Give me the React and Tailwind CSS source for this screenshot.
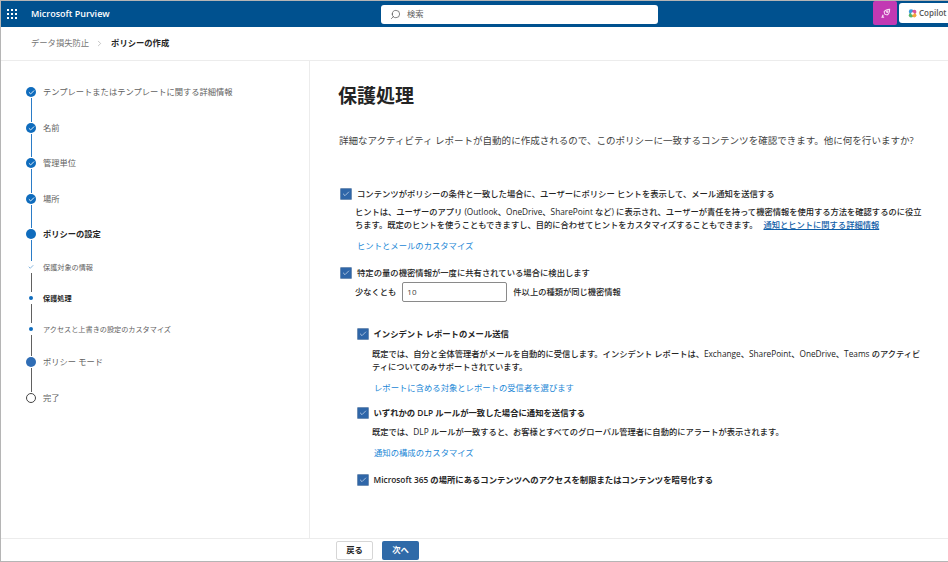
import { Check, ChevronRight, Search } from 'lucide-react';

const FONT = { fontFamily: '"Open Sans", "Noto Sans CJK JP", sans-serif' };

const steps = [
  { label: 'テンプレートまたはテンプレートに関する詳細情報', kind: 'done', h: 'h-[36px]', line: 'blue' },
  { label: '名前', kind: 'done', h: 'h-[35px]', line: 'blue' },
  { label: '管理単位', kind: 'done', h: 'h-[36px]', line: 'blue' },
  { label: '場所', kind: 'done', h: 'h-[35px]', line: 'blue' },
  { label: 'ポリシーの設定', kind: 'current', h: 'h-[33px]', line: 'blue' },
  { label: '保護対象の情報', kind: 'subdone', h: 'h-[31px]', line: 'gray' },
  { label: '保護処理', kind: 'subcurrent', h: 'h-[31px]', line: 'gray' },
  { label: 'アクセスと上書きの設定のカスタマイズ', kind: 'sub', h: 'h-[33px]', line: 'gray' },
  { label: 'ポリシー モード', kind: 'todo', h: 'h-[36px]', line: 'gray' },
  { label: '完了', kind: 'end', h: 'h-[14px]' },
];

function StepIcon({ kind }) {
  if (kind === 'done') {
    return (
      <span className="w-[10px] h-[10px] rounded-full bg-[#0f6cbd] flex items-center justify-center">
        <Check size={7} strokeWidth={3} className="text-white" />
      </span>
    );
  }
  if (kind === 'current') return <span className="w-[10px] h-[10px] rounded-full bg-[#0f6cbd]" />;
  if (kind === 'todo') return <span className="w-[10px] h-[10px] rounded-full bg-[#2f6db5]" />;
  if (kind === 'end') return <span className="w-[10px] h-[10px] rounded-full border border-[#444] bg-white" />;
  if (kind === 'subdone') return <Check size={6} strokeWidth={2} className="text-[#0f6cbd]" />;
  return <span className="w-[4px] h-[4px] rounded-full bg-[#0f6cbd]" />;
}

function Step({ step }) {
  const bold = step.kind === 'current' || step.kind === 'subcurrent';
  const small = step.kind === 'subdone' || step.kind === 'sub' || step.kind === 'subcurrent';
  return (
    <div className={`flex ${step.h}`}>
      <div className="w-[10px] flex flex-col items-center">
        <div className="h-[10px] flex items-center justify-center shrink-0">
          <StepIcon kind={step.kind} />
        </div>
        {step.line && (
          <div className={`w-px flex-1 mt-[1px] mb-[1px] ${step.line === 'blue' ? 'bg-[#2b7cc7]' : 'bg-[#616161]'}`} />
        )}
      </div>
      <span
        className={`ml-[7px] h-[10px] flex items-center whitespace-nowrap ${small ? 'text-[7.15px]' : 'text-[8.28px]'} ${
          bold ? 'font-bold text-[#242424]' : 'text-[#616161]'
        }`}
      >
        {step.label}
      </span>
    </div>
  );
}

function Box() {
  return (
    <span className="w-[12px] h-[12px] shrink-0 bg-[#2f66a8] border border-[#6f8fb5] rounded-[1px] flex items-center justify-center">
      <Check size={8} strokeWidth={2} className="text-[#dfe9f5]" />
    </span>
  );
}

function Option({ label, bold }) {
  return (
    <div className={`flex items-center ml-[1px] ${bold ? 'gap-[4.5px]' : 'gap-[5px]'}`}>
      <Box />
      <span className={`text-[8.33px] leading-[13px] whitespace-nowrap text-[#242424] ${bold ? 'font-semibold' : 'font-medium'}`}>{label}</span>
    </div>
  );
}

function TextLink({ children, className = '' }) {
  return <div className={`text-[8.33px] leading-[13px] text-[#1b87d6] ${className}`}>{children}</div>;
}

function Desc({ children, className = '' }) {
  return <p className={`text-[8.28px] leading-[13px] text-[#242424] font-medium ${className}`}>{children}</p>;
}

export default function App() {
  return (
    <div style={FONT} className="w-[948px] h-[562px] overflow-hidden bg-white flex flex-col border-l border-[#b5b5b5] border-t border-b text-[#242424]">
      <header className="h-[26px] shrink-0 bg-[#00518f] flex items-center">
        <div className="w-[380px] shrink-0 flex items-center">
          <div className="grid grid-cols-3 gap-[2px] ml-[6px] w-[10px]">
            {Array.from({ length: 9 }).map((_, i) => (
              <span key={i} className="w-[2px] h-[2px] bg-white" />
            ))}
          </div>
          <span className="ml-[14px] text-white text-[9px] font-semibold whitespace-nowrap">Microsoft Purview</span>
        </div>
        <div className="w-[277px] shrink-0 h-[19px] bg-white rounded-[3px] flex items-center px-[9px] gap-[6px]">
          <Search size={11} strokeWidth={1.4} className="text-[#444] -scale-x-100" />
          <span className="text-[8.3px] text-[#616161]">検索</span>
        </div>
        <button className="ml-[215px] w-[24px] shrink-0 h-[24px] -mt-[2px] bg-[#c239b3] rounded-[2px] flex items-center justify-center">
          <svg width="11" height="11" viewBox="0 0 16 16" fill="none" stroke="#f8dcf4" strokeWidth="1.5">
            <path d="M6 5.5 C8 2.5 11 2 14 2 C14 5 13.5 8 10.5 10 L7 9 Z" />
            <circle cx="10.5" cy="5.5" r="1" />
            <path d="M3 10.5 L5 10.5 M2 13.5 L6 13.5 M5 11 L3 13" />
          </svg>
        </button>
        <button className="ml-[2px] w-[60px] shrink-0 h-[20px] -mt-[2px] bg-white rounded-[3px] flex items-center pl-[9px] gap-[2px]">
          <svg width="9" height="9" viewBox="0 0 10 10" className="shrink-0">
            <circle cx="3.5" cy="3" r="2.6" fill="#3b9be0" />
            <circle cx="7" cy="3.2" r="2.4" fill="#d9539a" />
            <circle cx="3.4" cy="7" r="2.5" fill="#58b368" />
            <circle cx="7" cy="7" r="2.4" fill="#f0a63c" />
            <circle cx="5" cy="5" r="1.4" fill="#fff" />
          </svg>
          <span className="text-[8px] font-semibold text-[#555]">Copilot</span>
        </button>
      </header>

      <nav className="h-[34px] shrink-0 border-b border-[#ececec] flex items-center pl-[30px]">
        <span className="text-[8.3px] text-[#757575]">データ損失防止</span>
        <ChevronRight size={9} strokeWidth={1.5} className="ml-[6px] mr-[7px] text-[#9a9a9a]" />
        <span className="text-[8.3px] font-bold text-[#242424]">ポリシーの作成</span>
      </nav>

      <div className="flex-1 min-h-0 flex">
        <aside className="w-[309px] shrink-0 border-r border-[#ececec] pl-[25px] pt-[26px]">
          {steps.map((s) => (
            <Step key={s.label} step={s} />
          ))}
        </aside>

        <main className="flex-1 min-w-0 pl-[29px] pt-[22px]">
          <h1 className="text-[19px] leading-[26px] font-bold text-[#242424] -ml-[1px]">保護処理</h1>
          <p className="mt-[25px] text-[9.52px] leading-[14px] whitespace-nowrap text-[#424242]">
            詳細なアクティビティ レポートが自動的に作成されるので、このポリシーに一致するコンテンツを確認できます。他に何を行いますか?
          </p>

          <div className="mt-[39px]">
            <Option label="コンテンツがポリシーの条件と一致した場合に、ユーザーにポリシー ヒントを表示して、メール通知を送信する" />
            <Desc className="mt-[5px] ml-[16px] w-[570px]">
              ヒントは、ユーザーのアプリ (Outlook、OneDrive、SharePoint など) に表示され、ユーザーが責任を持って機密情報を使用する方法を確認するのに役立ちます。既定のヒントを使うこともできますし、目的に合わせてヒントをカスタマイズすることもできます。
              <a className="ml-[6px] text-[#0f5ea8] underline">通知とヒントに関する詳細情報</a>
            </Desc>
            <TextLink className="mt-[8px] ml-[18px]">ヒントとメールのカスタマイズ</TextLink>
          </div>

          <div className="mt-[14px]">
            <Option label="特定の量の機密情報が一度に共有されている場合に検出します" />
            <div className="mt-[3px] ml-[16px] flex items-center text-[8.28px] font-medium">
              <span>少なくとも</span>
              <div className="ml-[6px] w-[105px] h-[20px] border border-[#8a8a8a] rounded-[2px] flex items-center pl-[4px] text-[8px] text-[#424242]">10</div>
              <span className="ml-[6px]">件以上の種類が同じ機密情報</span>
            </div>
          </div>

          <div className="mt-[25px] ml-[17px]">
            <Option bold label="インシデント レポートのメール送信" />
            <Desc className="mt-[7px] ml-[16px] w-[556px]">
              既定では、自分と全体管理者がメールを自動的に受信します。インシデント レポートは、Exchange、SharePoint、OneDrive、Teams のアクティビティについてのみサポートされています。
            </Desc>
            <TextLink className="mt-[8px] ml-[18px]">レポートに含める対象とレポートの受信者を選びます</TextLink>

            <div className="mt-[12px]">
              <Option bold label="いずれかの DLP ルールが一致した場合に通知を送信する" />
            </div>
            <Desc className="mt-[6px] ml-[16px]">
              既定では、DLP ルールが一致すると、お客様とすべてのグローバル管理者に自動的にアラートが表示されます。
            </Desc>
            <TextLink className="mt-[8px] ml-[18px]">通知の構成のカスタマイズ</TextLink>

            <div className="mt-[14px]">
              <Option bold label="Microsoft 365 の場所にあるコンテンツへのアクセスを制限またはコンテンツを暗号化する" />
            </div>
          </div>
        </main>
      </div>

      <footer className="h-[23px] shrink-0 border-t border-[#ececec] flex items-center justify-start pl-[335px] gap-[9px]">
        <button className="w-[37px] h-[19px] border border-[#d6d6d6] rounded-[2px] text-[8.3px] font-semibold text-[#242424]">戻る</button>
        <button className="w-[37px] h-[19px] bg-[#2f6aa8] rounded-[2px] text-[8.3px] font-semibold text-white">次へ</button>
      </footer>
    </div>
  );
}
